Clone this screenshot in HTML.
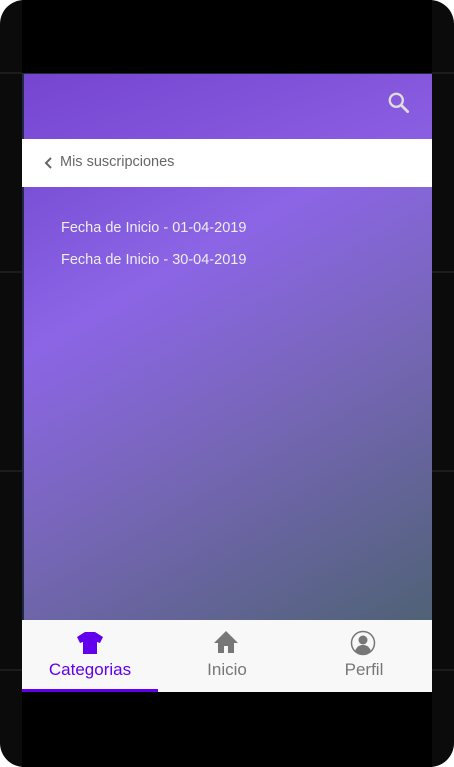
<!DOCTYPE html>
<html><head><style>
*{margin:0;padding:0;box-sizing:border-box}
body{width:454px;height:767px;background:#fff;font-family:"Liberation Sans",sans-serif;position:relative;overflow:hidden}
.frame{position:absolute;left:0;top:0;width:454px;height:767px;background:#0b0b0b;border-radius:24px;overflow:hidden}
.line{position:absolute;left:0;width:454px;height:2px;background:#1c1c1c}
.screen{position:absolute;left:22px;top:0;width:410px;height:767px;background:#000}
.app{position:absolute;left:22px;top:73px;width:410px;height:619px;overflow:hidden;background:#1f2a44}
.hdr{position:absolute;left:2px;top:1px;width:408px;height:65px;background:linear-gradient(160deg,#7545d0,#8b5fe2)}
.bar{position:absolute;left:0;top:66px;width:410px;height:48px;background:#fff;color:#666;font-size:14.5px}
.body{position:absolute;left:2px;top:114px;width:408px;height:433px;background:linear-gradient(150deg,#7a50d6 0%,#8c65e6 25%,#7766b8 55%,#4f6276 100%)}
.body div{position:absolute;left:37px;color:#eee;font-size:14.5px}
.nav{position:absolute;left:0;top:547px;width:410px;height:72px;background:#f8f8f8}
.tab{position:absolute;top:0;width:136px;height:72px;text-align:center;font-size:17px;color:#777}
.tab span{position:absolute;left:0;right:0;top:40px}
</style></head><body>
<div class="frame">
<div class="screen"></div>
<div class="line" style="top:72px"></div>
<div class="line" style="top:271px"></div>
<div class="line" style="top:470px"></div>
<div class="line" style="top:669px"></div>
<div class="screen" style="top:0;height:73px"></div>
<div class="screen" style="top:692px;height:75px"></div>
<div class="app">
<div class="hdr">
<svg style="position:absolute;left:362px;top:16px" width="26" height="26" viewBox="0 0 24 24"><circle cx="9.5" cy="9.5" r="6" fill="none" stroke="#ddd" stroke-width="2.2"/><path d="M14 14l6 6" stroke="#ddd" stroke-width="2.6" stroke-linecap="round"/></svg>
</div>
<div class="bar">
<svg style="position:absolute;left:22px;top:17px" width="9" height="14" viewBox="0 0 9 14"><path d="M7 2L2 7l5 5" fill="none" stroke="#666" stroke-width="2"/></svg>
<span style="position:absolute;left:38px;top:15px">Mis suscripciones</span>
</div>
<div class="body">
<div style="top:33px">Fecha de Inicio - 01-04-2019</div>
<div style="top:65px">Fecha de Inicio - 30-04-2019</div>
</div>
<div class="nav">
<div class="tab" style="left:0;color:#6200ee">
<svg style="position:absolute;left:55px;top:12px" width="26" height="22" viewBox="0 0 26 22"><path d="M8 0h10l8 5-3 6-3-1v12H6V10l-3 1-3-6z" fill="#6200ee"/></svg>
<span>Categorias</span></div>
<div class="tab" style="left:137px">
<svg style="position:absolute;left:54px;top:10px" width="26" height="24" viewBox="0 0 26 24"><path d="M13 1L1 13h4v10h6v-7h4v7h6V13h4z" fill="#777"/></svg>
<span>Inicio</span></div>
<div class="tab" style="left:274px">
<svg style="position:absolute;left:54px;top:10px" width="26" height="26" viewBox="0 0 26 26"><circle cx="13" cy="13" r="11.5" fill="none" stroke="#777" stroke-width="1.5"/><circle cx="13" cy="10" r="4.5" fill="#777"/><path d="M5 21c2-5 5-6 8-6s6 1 8 6a11 11 0 0 1-16 0z" fill="#777"/></svg>
<span>Perfil</span></div>
<div style="position:absolute;left:0;top:69px;width:136px;height:3px;background:#6200ee"></div>
</div>
</div>
</div>
</body></html>
